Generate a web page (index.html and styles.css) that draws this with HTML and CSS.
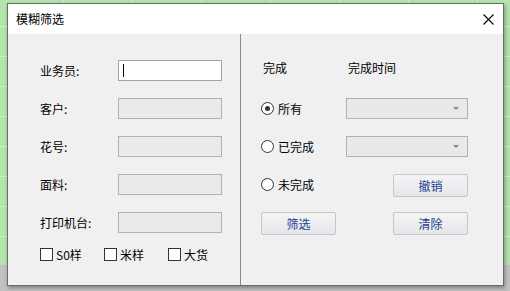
FILE: index.html
```html
<!DOCTYPE HTML>
<html>
<head>
    <meta charset="UTF-8">
    <title>模糊筛选</title>
    <link rel="stylesheet" href="styles.css">
</head>
<body>
<div id="dialog">

    <div class="title">
        <span>模糊筛选</span>
        <svg class="close" width="11" height="11" viewBox="0 0 11 11">
            <path d="M0.5 0.5 L10.5 10.5 M10.5 0.5 L0.5 10.5" stroke="#000" stroke-width="1.1" fill="none"/>
        </svg>
    </div>

    <div class="content">
        <div class="left">
            <div class="row">
                <label>业务员:</label>
                <div class="input on"><i class="caret"></i></div>
            </div>
            <div class="row">
                <label>客户:</label>
                <div class="input"></div>
            </div>
            <div class="row">
                <label>花号:</label>
                <div class="input"></div>
            </div>
            <div class="row">
                <label>面料:</label>
                <div class="input"></div>
            </div>
            <div class="row">
                <label>打印机台:</label>
                <div class="input"></div>
            </div>
            <ul class="checks">
                <li><span class="box"></span>S0样</li>
                <li><span class="box"></span>米样</li>
                <li><span class="box"></span>大货</li>
            </ul>
        </div>

        <div class="right">
            <div class="head">
                <span class="col1">完成</span>
                <span class="col2">完成时间</span>
            </div>
            <div class="row">
                <div class="radio on"><span class="dot"></span>所有</div>
                <div class="combo"><i class="arrow"></i></div>
            </div>
            <div class="row">
                <div class="radio"><span class="dot"></span>已完成</div>
                <div class="combo"><i class="arrow"></i></div>
            </div>
            <div class="row">
                <div class="radio"><span class="dot"></span>未完成</div>
                <div class="btns"><span class="btn">撤销</span></div>
            </div>
            <div class="row bottom">
                <span class="btn">筛选</span>
                <span class="btn">清除</span>
            </div>
        </div>
    </div>

</div>
</body>
</html>
```

FILE: styles.css
```css
body{font-family: "Noto Sans CJK SC",sans-serif;font-size:12px;color:#000;}
body,p{margin:0;}
ol,ul,li{margin:0;padding:0;list-style:none;}

body{
    width: 510px;
    height: 291px;
    overflow: hidden;
    padding-top: 3px;
    box-sizing: border-box;
    background:
        linear-gradient(#c2c2c2, #c2c2c2) 0 265px / 100% 26px no-repeat,
        repeating-linear-gradient(to bottom, transparent 0, transparent 26px, #d2f0cd 26px, #d2f0cd 27px, transparent 27px, transparent 30px),
        repeating-linear-gradient(to right, transparent 0, transparent 63px, #d2f0cd 63px, #d2f0cd 64px, transparent 64px, transparent 69px),
        #b4e5ad;
}
#dialog{
    width: 497px;
    height: 283px;
    margin-left: 7px;
    border: 1px solid #6b6b6b;
    box-sizing: border-box;
    box-shadow: 1px 2px 4px rgba(0,0,0,.35);
    display: flex;
    flex-direction: column;
}
#dialog .title{
    height: 30px;
    background: #fff;
    display: flex;
    align-items: center;
    justify-content: space-between;
    padding: 0 9px 0 8px;
    flex-shrink: 0;
}
#dialog .title span{
    line-height: 14px;
    margin-top: -1px;
}
#dialog .content{
    flex: 1;
    display: flex;
    background: #f0f0f0;
}
#dialog .left{
    width: 233px;
    border-right: 1px solid #8a8a8a;
    padding: 26px 0 0 32px;
    box-sizing: border-box;
}
#dialog .row{
    display: flex;
    align-items: center;
    height: 21px;
    margin-bottom: 17px;
}
#dialog .left label{
    width: 78px;
    margin-top: -1px;
}
#dialog .input{
    width: 104px;
    height: 21px;
    box-sizing: border-box;
    border: 1px solid #adb2b7;
    background: #e9eaec;
    position: relative;
}
#dialog .input.on{
    border-color: #a5a5a5;
    background: #fff;
}
#dialog .caret{
    position: absolute;
    left: 4px;
    top: 3px;
    width: 1px;
    height: 13px;
    background: #000;
}
#dialog .checks{
    display: flex;
    margin-top: -3px;
}
#dialog .checks li{
    width: 64px;
    display: flex;
    align-items: center;
    height: 14px;
}
#dialog .box{
    width: 13px;
    height: 13px;
    box-sizing: border-box;
    border: 1px solid #333;
    background: #fff;
    margin-right: 3px;
}
#dialog .right{
    flex: 1;
    padding: 23px 0 0 20px;
}
#dialog .head{
    display: flex;
    height: 21px;
    align-items: center;
    margin-bottom: 20px;
}
#dialog .head .col1{
    width: 85px;
    padding-left: 2px;
    box-sizing: border-box;
}
#dialog .head .col2{
    padding-left: 2px;
}
#dialog .radio{
    width: 85px;
    display: flex;
    align-items: center;
}
#dialog .radio .dot{
    width: 13px;
    height: 13px;
    box-sizing: border-box;
    border: 1px solid #333;
    border-radius: 50%;
    background: #fff;
    margin-right: 4px;
    position: relative;
}
#dialog .radio.on .dot:after{
    content: "";
    position: absolute;
    left: 3px;
    top: 3px;
    width: 5px;
    height: 5px;
    border-radius: 50%;
    background: #333;
}
#dialog .combo{
    width: 122px;
    height: 21px;
    box-sizing: border-box;
    border: 1px solid #adb2b7;
    background: #e8e9eb;
    position: relative;
}
#dialog .arrow{
    position: absolute;
    right: 8px;
    top: 8px;
    border-left: 3px solid transparent;
    border-right: 3px solid transparent;
    border-top: 3px solid #8a8a8a;
}
#dialog .btns{
    width: 122px;
    height: 23px;
    margin-top: 2px;
    display: flex;
    justify-content: flex-end;
}
#dialog .btn{
    width: 75px;
    height: 23px;
    box-sizing: border-box;
    border: 1px solid #c6c6c6;
    border-radius: 2px;
    background: linear-gradient(#f3f4f4, #eceef1 50%, #e4e6ea);
    color: #1f418c;
    display: flex;
    align-items: center;
    justify-content: center;
}
#dialog .row.bottom{
    height: 23px;
    justify-content: space-between;
    width: 207px;
}
```
